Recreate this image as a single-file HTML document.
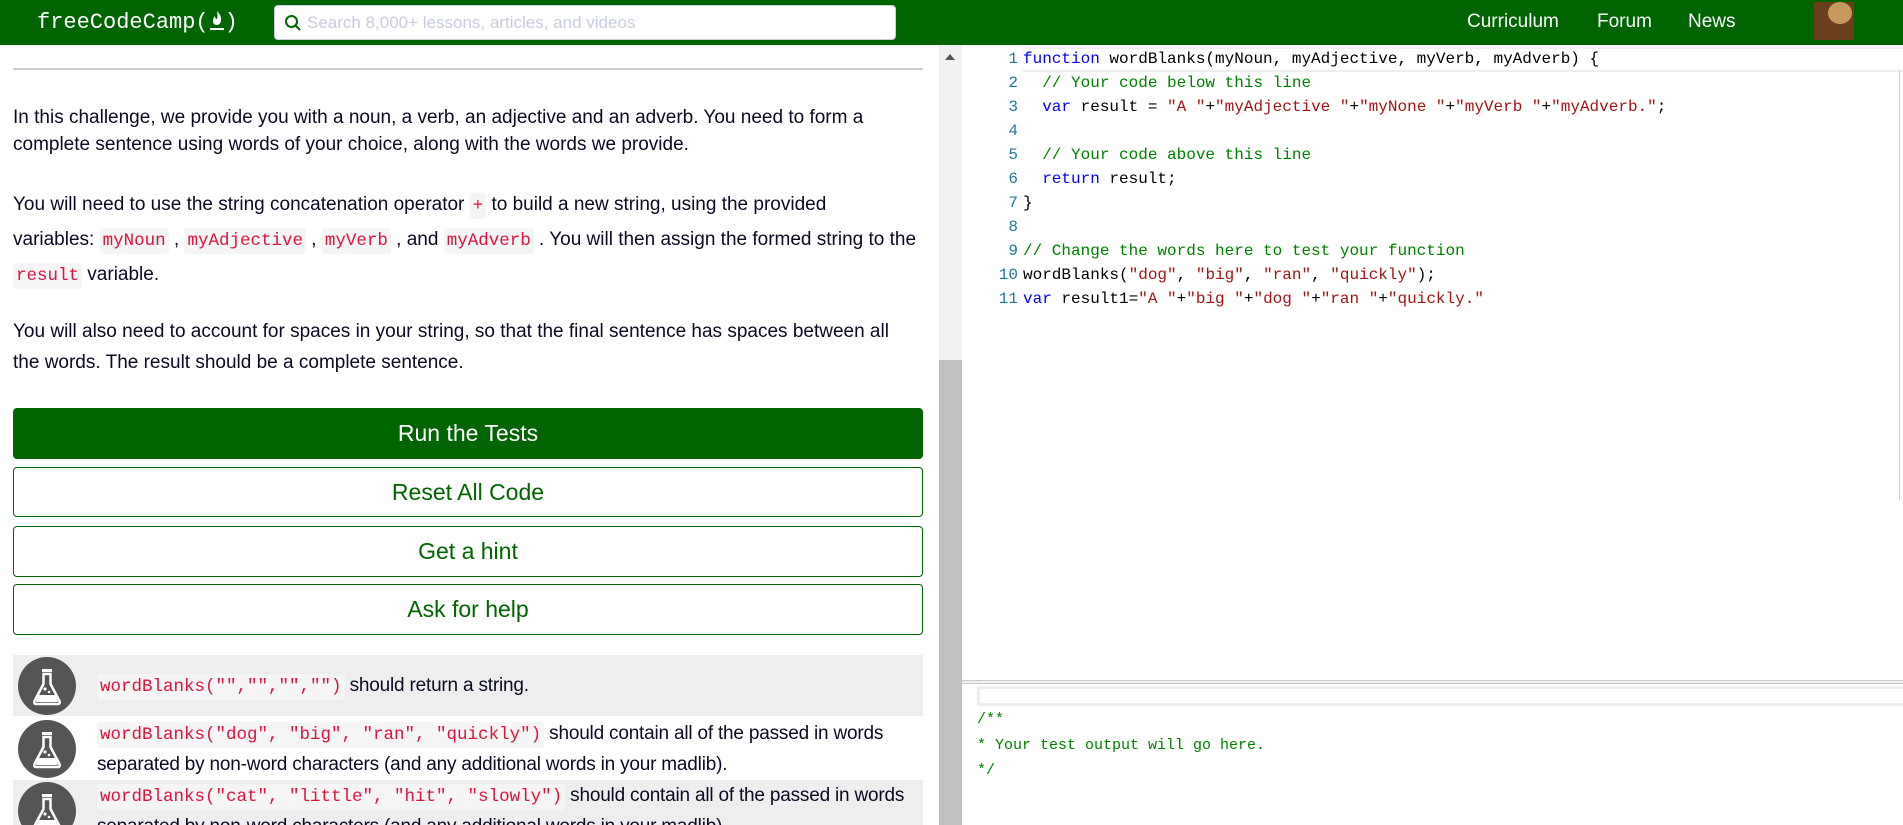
<!DOCTYPE html>
<html><head><meta charset="utf-8"><style>
*{box-sizing:border-box;margin:0;padding:0}
body{width:1903px;height:825px;overflow:hidden;background:#fff;font-family:"Liberation Sans",sans-serif;color:#0a0a23;position:relative}
.hdr{position:absolute;left:0;top:0;width:1903px;height:45px;background:#006400}
.logo{position:absolute;left:37px;top:9px;color:#fff;font-family:"Liberation Mono",monospace;font-size:22px;white-space:nowrap}
.search{position:absolute;left:274px;top:5px;width:622px;height:35px;background:#fff;border-radius:4px;border:1px solid #ccd}
.search span{position:absolute;left:32px;top:7px;color:#c8cce0;font-size:17px}
.nav{position:absolute;top:11px;color:#fff;font-size:19px}
.av{position:absolute;left:1814px;top:2px;width:40px;height:38px;background:#6b3f1d}
.av i{position:absolute;left:14px;top:0;width:24px;height:22px;border-radius:50%;background:#c8995f}
.rule{position:absolute;left:13px;top:68px;width:910px;height:2px;background:#ccc}
p.t{position:absolute;left:13px;font-size:19px;width:915px;white-space:nowrap;letter-spacing:0}
code{font-family:"Liberation Mono",monospace;font-size:17.5px;color:#dc143c;background:#f5f5f5;padding:3px 3px;border-radius:3px;letter-spacing:0}
.btn{position:absolute;left:13px;width:910px;border:1px solid #006400;border-radius:4px;text-align:center;font-size:23px;color:#006400}
.run{background:#006400;color:#fff}
.sb{position:absolute;left:939px;top:45px;width:23px;height:780px;background:#f1f1f1}
.thumb{position:absolute;left:939px;top:360px;width:23px;height:465px;background:#c1c1c1}
.row{position:absolute;left:13px;width:910px;font-size:19px;line-height:29px;letter-spacing:-0.2px}
.ic{position:absolute;left:5px;width:58px;height:58px;border-radius:50%;background:#555}
.row .tx{position:absolute;left:84px;width:830px;white-space:nowrap}
.ed{position:absolute;left:962px;top:45px;width:941px;height:635px;font-family:"Liberation Mono",monospace;font-size:16px}
.ln{position:absolute;left:0;width:56px;text-align:right;color:#237893}
.cl{position:absolute;left:61px;white-space:pre;color:#000}
.k{color:#0000ff}.s{color:#a31515}.c{color:#008000}
.act{position:absolute;left:61px;top:2px;width:880px;height:25px;border-top:2px solid #eee;border-bottom:2px solid #eee}
.div{position:absolute;left:962px;top:680px;width:941px;height:4px;border-top:1px solid #ccc;border-bottom:1px solid #ccc;background:#eee}
.inp{position:absolute;left:977px;top:686px;width:926px;height:20px;border:3px solid #eee;border-right:none}
.out{position:absolute;left:977px;font-family:"Liberation Mono",monospace;font-size:15px;color:#008000;white-space:pre}
</style></head><body>
<svg width="0" height="0" style="position:absolute"><defs><symbol id="fl" viewBox="0 0 58 58"><rect x="24" y="12" width="10" height="3" fill="#fff"/><path d="M25.5 17 h7 v10 l9 17 q1 3 -2 3 h-21 q-3 0 -2 -3 l9 -17 z" fill="none" stroke="#fff" stroke-width="2.5"/><path d="M21 38 h16 l3 6 q0 1 -1 1 h-20 q-1 0 -1 -1 z" fill="#fff"/><circle cx="27" cy="32" r="1.6" fill="#fff"/><circle cx="31" cy="35" r="1.3" fill="#fff"/></symbol></defs></svg>
<div class="hdr">
<div class="logo">freeCodeCamp(<svg width="16" height="22" viewBox="0 0 16 22" style="vertical-align:-3px"><path d="M8 2 q5 5 4 10 q-1 4 -4 4 q-4 0 -4 -4 q0 -3 2 -5 q0 3 2 3 q1 -3 0 -8z" fill="#fff"/><rect x="1" y="19" width="14" height="2" fill="#fff"/></svg>)</div>
<div class="search"><svg style="position:absolute;left:9px;top:8px" width="18" height="18" viewBox="0 0 18 18"><circle cx="7.5" cy="7.5" r="5.5" fill="none" stroke="#006400" stroke-width="2"/><line x1="11.5" y1="11.5" x2="16" y2="16" stroke="#006400" stroke-width="2"/></svg><span>Search 8,000+ lessons, articles, and videos</span></div>
<div class="nav" style="left:1467px">Curriculum</div>
<div class="nav" style="left:1597px">Forum</div>
<div class="nav" style="left:1688px">News</div>
<div class="av"><i></i></div>
</div>
<div class="rule"></div>
<p class="t" style="top:104px;line-height:27px">In this challenge, we provide you with a noun, a verb, an adjective and an adverb. You need to form a<br>complete sentence using words of your choice, along with the words we provide.</p>
<p class="t" style="top:188px;line-height:33px">You will need to use the string concatenation operator <code>+</code> to build a new string, using the provided<br>variables: <code>myNoun</code> , <code>myAdjective</code> , <code>myVerb</code> , and <code>myAdverb</code> . You will then assign the formed string to the<br><code>result</code> variable.</p>
<p class="t" style="top:316px;line-height:31px">You will also need to account for spaces in your string, so that the final sentence has spaces between all<br>the words. The result should be a complete sentence.</p>
<div class="btn run" style="top:408px;height:51px;line-height:49px">Run the Tests</div>
<div class="btn" style="top:467px;height:50px;line-height:48px">Reset All Code</div>
<div class="btn" style="top:526px;height:51px;line-height:49px">Get a hint</div>
<div class="btn" style="top:584px;height:51px;line-height:49px">Ask for help</div>
<div class="row" style="top:655px;height:61px;background:#eee"><svg class="ic" style="top:2px"><use href="#fl"/></svg><div class="tx" style="top:16px"><code>wordBlanks("","","","")</code> should return a string.</div></div>
<div class="row" style="top:718px;height:62px"><svg class="ic" style="top:2px"><use href="#fl"/></svg><div class="tx" style="top:1px"><code>wordBlanks("dog", "big", "ran", "quickly")</code> should contain all of the passed in words<br>separated by non-word characters (and any additional words in your madlib).</div></div>
<div class="row" style="top:780px;height:45px;background:#eee;overflow:hidden"><svg class="ic" style="top:2px"><use href="#fl"/></svg><div class="tx" style="top:1px"><code>wordBlanks("cat", "little", "hit", "slowly")</code> should contain all of the passed in words<br>separated by non-word characters (and any additional words in your madlib).</div></div>
<div class="sb"></div><div class="thumb"></div>
<div style="position:absolute;left:945px;top:54px;width:0;height:0;border-left:5px solid transparent;border-right:5px solid transparent;border-bottom:6px solid #555"></div>
<div class="ed">
<div class="act"></div>
<div class="ln" style="top:2px;line-height:24px">1<br>2<br>3<br>4<br>5<br>6<br>7<br>8<br>9<br>10<br>11</div>
<div class="cl" style="top:2px;line-height:24px"><span class="k">function</span> wordBlanks(myNoun, myAdjective, myVerb, myAdverb) {
  <span class="c">// Your code below this line</span>
  <span class="k">var</span> result = <span class="s">"A "</span>+<span class="s">"myAdjective "</span>+<span class="s">"myNone "</span>+<span class="s">"myVerb "</span>+<span class="s">"myAdverb."</span>;

  <span class="c">// Your code above this line</span>
  <span class="k">return</span> result;
}

<span class="c">// Change the words here to test your function</span>
wordBlanks(<span class="s">"dog"</span>, <span class="s">"big"</span>, <span class="s">"ran"</span>, <span class="s">"quickly"</span>);
<span class="k">var</span> result1=<span class="s">"A "</span>+<span class="s">"big "</span>+<span class="s">"dog "</span>+<span class="s">"ran "</span>+<span class="s">"quickly."</span></div>
</div>
<div style="position:absolute;left:1899px;top:70px;width:1px;height:430px;background:#ccc"></div>
<div class="div"></div>
<div class="inp"></div>
<div class="out" style="top:707px;line-height:25.5px">/**
* Your test output will go here.
*/</div>
</body></html>
